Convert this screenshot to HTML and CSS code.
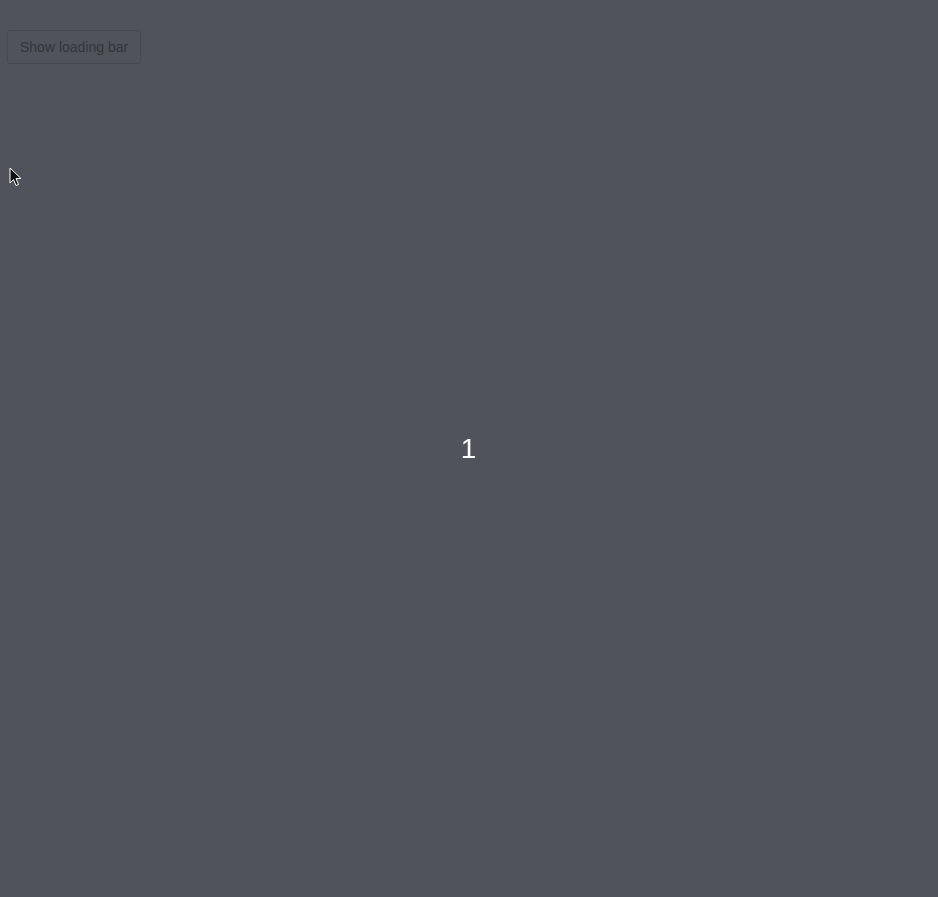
FILE: index.html
```html
<!DOCTYPE html>
<html>
<head>
<meta charset="utf-8">
<link rel="stylesheet" href="styles.css">
</head>
<body>
<div class="toolbar">
  <button class="btn">Show loading bar</button>
</div>
<div class="center"><span class="num">1</span></div>
<svg class="cursor" width="13" height="20" viewBox="0 0 13 20">
  <path d="M1 1 L1 16 L4.5 12.5 L7 18.5 L9.5 17.5 L7 11.5 L12 11.5 Z" fill="#111" stroke="#fff" stroke-width="1"/>
</svg>
</body>
</html>
```
FILE: styles.css
```css
html, body {
  margin: 0;
  padding: 0;
  height: 100%;
  background: #50535b;
  font-family: "Liberation Sans", Arial, sans-serif;
  overflow: hidden;
}
.toolbar {
  padding: 30px 7px 0;
}
.btn {
  display: block;
  box-sizing: border-box;
  height: 34px;
  padding: 0 12px;
  white-space: nowrap;
  background: #50535b;
  border: 1px solid #46494f;
  border-radius: 3px;
  color: #33363c;
  font-family: "Liberation Sans", Arial, sans-serif;
  font-size: 14px;
}
.center {
  position: fixed;
  inset: 0;
  display: flex;
  align-items: center;
  justify-content: center;
}
.num {
  color: #ffffff;
  font-size: 28px;
  line-height: 1;
  margin-top: 1px;
  margin-right: 1px;
}
.cursor {
  position: absolute;
  left: 9px;
  top: 167px;
}
```
